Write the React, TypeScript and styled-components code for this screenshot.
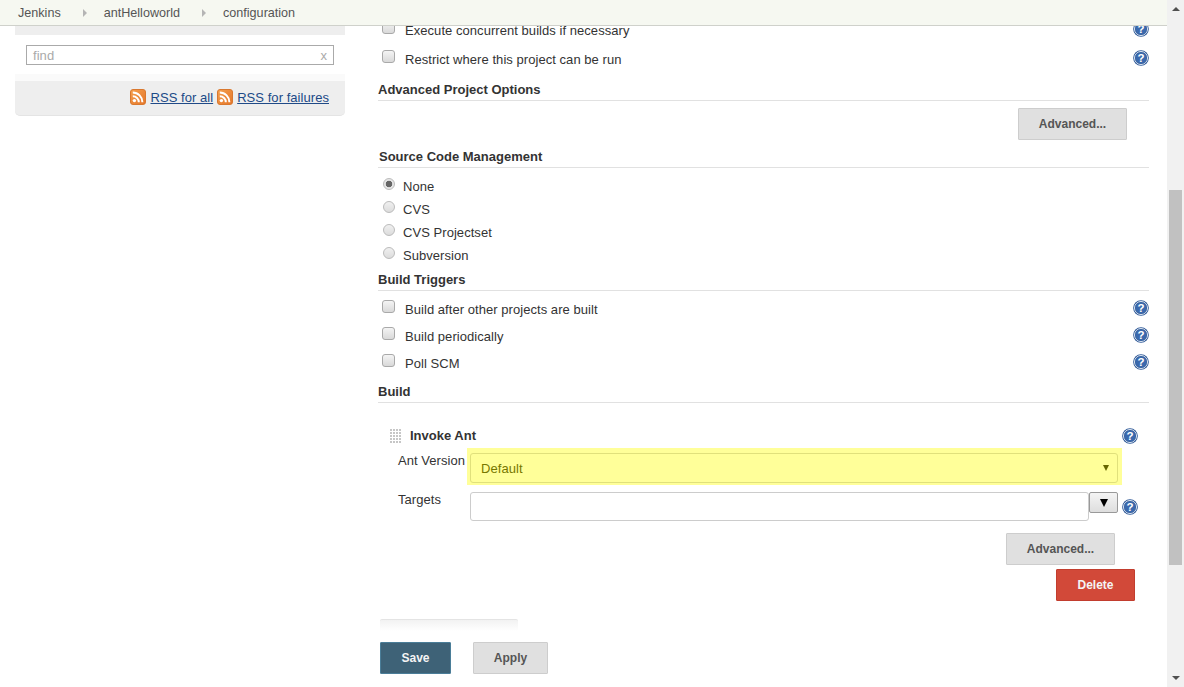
import { createGlobalStyle, styled } from 'styled-components';

const GlobalStyle = createGlobalStyle`
  html, body { margin: 0; padding: 0; height: 100%; overflow: hidden; background: #fff; }
  body { font-family: "Liberation Sans", Arial, sans-serif; font-size: 13px; letter-spacing: 0.05px; color: #333; }
`;

const Page = styled.div`
  display: flex;
  width: 1184px;
  height: 687px;
  overflow: hidden;
`;

const Viewport = styled.div`
  position: relative;
  flex: 1;
  display: flex;
  align-items: flex-start;
  padding-left: 15px;
  overflow: hidden;
`;

const Breadcrumbs = styled.nav`
  position: absolute;
  top: 0;
  left: 0;
  right: 0;
  z-index: 10;
  height: 25px;
  display: flex;
  align-items: center;
  padding-left: 18px;
  background: #f6f8f1;
  border-bottom: 1px solid #cfd1cb;
  color: #555;
  font-size: 12.6px;
  letter-spacing: 0;
`;

const Crumb = styled.span`
  display: inline-block;
`;

const CrumbArrow = styled.span`
  width: 0;
  height: 0;
  margin: 0 17px 0 22px;
  border-left: 4px solid #b5b5b5;
  border-top: 4px solid transparent;
  border-bottom: 4px solid transparent;
`;

const Sidebar = styled.aside`
  flex: none;
  width: 330px;
  height: 80px;
  padding-top: 35px;
  background: #eee;
  border-radius: 0 0 5px 5px;
  border-bottom: 1px solid #e4e4e4;
`;

const SearchPanel = styled.div`
  height: 46px;
  padding: 10px 11px 0;
  box-sizing: border-box;
  background: #fff;
  border-bottom: 7px solid #fafafa;
`;

const SearchBox = styled.div`
  display: flex;
  align-items: center;
  justify-content: space-between;
  height: 20px;
  box-sizing: border-box;
  padding: 0 6px;
  background: #fff;
  border: 1px solid #aaa;
  color: #aaa;
  font-size: 13px;
`;

const RssRow = styled.div`
  display: flex;
  justify-content: flex-end;
  align-items: center;
  gap: 4px;
  height: 32px;
  padding-right: 16px;
`;

const RssLink = styled.a`
  color: #204a87;
  text-decoration: underline;
  font-size: 13px;
`;

const Main = styled.main`
  flex: none;
  width: 771px;
  margin-left: 33px;
  padding-top: 16px;
  display: flex;
  flex-direction: column;
`;

const OptionRow = styled.label<{ $height?: number }>`
  display: flex;
  align-items: center;
  height: ${(p) => p.$height ?? 27}px;
  padding-left: 4px;
  color: #333;
`;

const OptionText = styled.span`
  flex: 1;
  margin-left: 5px;
`;

const OptionHelp = styled.span`
  display: inline-flex;
  margin-bottom: 4px;
`;

const TriggerGroup = styled.div`
  padding-top: 5px;
`;

const Checkbox = styled.input.attrs({ type: 'checkbox' })`
  appearance: none;
  width: 13px;
  height: 13px;
  margin: -6px 5px 0 0;
  border: 1px solid #a9a9a9;
  border-radius: 3px;
  background: linear-gradient(#f4f4f4, #d9d9d9);
`;

const RadioGroup = styled.div`
  padding-top: 7px;
`;

const RadioRow = styled.label`
  display: flex;
  align-items: center;
  height: 23px;
  padding-left: 5px;
  color: #333;
`;

const Radio = styled.input.attrs({ type: 'radio' })`
  appearance: none;
  width: 12px;
  height: 12px;
  margin: -6px 8px 0 0;
  border: 1px solid #bbb;
  border-radius: 50%;
  background: ${(p) =>
    p.defaultChecked
      ? 'radial-gradient(circle, #666 0 3px, #e6e6e6 3.6px)'
      : 'linear-gradient(#f0f0f0, #dcdcdc)'};
`;

const SectionTitle = styled.h3<{ $height: number; $pad?: number; $inset?: number }>`
  height: ${(p) => p.$height}px;
  box-sizing: border-box;
  margin: 0;
  padding-top: ${(p) => p.$pad ?? 0}px;
  padding-left: ${(p) => p.$inset ?? 0}px;
  display: flex;
  align-items: center;
  font-size: 13px;
  font-weight: 700;
  letter-spacing: 0;
  color: #333;
  border-bottom: 1px solid #e1e1e1;
`;

const ButtonRow = styled.div<{ $right: number; $top: number }>`
  display: flex;
  justify-content: flex-end;
  padding-right: ${(p) => p.$right}px;
  margin-top: ${(p) => p.$top}px;
`;

const Button = styled.button<{ $kind?: 'default' | 'danger' | 'primary'; $width: number }>`
  width: ${(p) => p.$width}px;
  height: 32px;
  padding: 0;
  font-family: inherit;
  font-size: 12px;
  font-weight: 700;
  border-radius: 1px;
  color: ${(p) => (p.$kind === 'default' || !p.$kind ? '#555' : '#f4f4f4')};
  background: ${(p) =>
    p.$kind === 'danger' ? '#d24939' : p.$kind === 'primary' ? '#3e6277' : '#e0e0e0'};
  border: 1px solid
    ${(p) => (p.$kind === 'danger' ? '#c23d2e' : p.$kind === 'primary' ? '#4a7d98' : '#cdcdcd')};
`;

const Builder = styled.section`
  margin-top: 21px;
  display: flex;
  flex-direction: column;
`;

const BuilderHead = styled.div`
  display: flex;
  align-items: center;
  height: 24px;
  padding: 0 11px 0 12px;
  font-weight: 700;
  letter-spacing: 0;
  color: #333;
`;

const Grip = styled.span`
  width: 11px;
  height: 14px;
  margin: -1px 9px 0 0;
  background-image: conic-gradient(from 0deg at 2px 2px, transparent 75%, #c6c6c6 0);
  background-size: 3px 3px;
`;

const BuilderTitle = styled.span`
  flex: 1;
  margin-top: -2px;
`;

const FieldRow = styled.div<{ $top?: number }>`
  display: flex;
  align-items: flex-start;
  padding-left: 20px;
  margin-top: ${(p) => p.$top ?? 0}px;
`;

const FieldLabel = styled.span<{ $top: number }>`
  width: 69px;
  flex: none;
  padding-top: ${(p) => p.$top}px;
  color: #333;
`;

const Highlight = styled.div`
  width: 648px;
  padding: 5px 4px 2px 3px;
  background: #ffff99;
`;

const SelectBox = styled.div`
  display: flex;
  align-items: center;
  justify-content: space-between;
  box-sizing: border-box;
  height: 30px;
  padding: 0 8px 0 10px;
  background: #ffff99;
  border: 1px solid #e0e07c;
  border-radius: 3px;
  color: #777700;
`;

const SelectCaret = styled.span`
  width: 0;
  height: 0;
  border-top: 6px solid #666600;
  border-left: 3px solid transparent;
  border-right: 3px solid transparent;
`;

const TextInput = styled.div`
  flex: none;
  width: 619px;
  height: 29px;
  margin-left: 3px;
  box-sizing: border-box;
  background: #fff;
  border: 1px solid #ccc;
  border-radius: 3px;
`;

const ComboButton = styled.div`
  flex: none;
  display: flex;
  align-items: center;
  justify-content: center;
  width: 29px;
  height: 21px;
  box-sizing: border-box;
  background: linear-gradient(#f4f4f4, #dedede);
  border: 1px solid #999;
  border-radius: 2px;
  &::before {
    content: '';
    border-top: 8px solid #000;
    border-left: 4px solid transparent;
    border-right: 4px solid transparent;
  }
`;

const HelpSlot = styled.span<{ $top?: number }>`
  display: inline-flex;
  flex: none;
  margin-left: 4px;
  margin-top: ${(p) => p.$top ?? 0}px;
`;

const RepeatEdge = styled.div`
  width: 138px;
  height: 12px;
  margin: 18px 0 0 2px;
  box-sizing: border-box;
  border-top: 1px solid #e4e4e4;
  border-radius: 2px 2px 0 0;
  background: linear-gradient(#f2f2f2, #fff);
`;

const FormActions = styled.div`
  display: flex;
  gap: 22px;
  margin: 11px 0 0 2px;
`;

const Scrollbar = styled.div`
  flex: none;
  width: 17px;
  display: flex;
  flex-direction: column;
  align-items: center;
  background: #f1f1f1;
`;

const ScrollArrow = styled.span<{ $down?: boolean }>`
  width: 0;
  height: 0;
  margin: ${(p) => (p.$down ? '0 0 7px' : '7px 0 0')};
  border-left: 4px solid transparent;
  border-right: 4px solid transparent;
  border-bottom: ${(p) => (p.$down ? '0' : '4px solid #505050')};
  border-top: ${(p) => (p.$down ? '4px solid #505050' : '0')};
`;

const ScrollTrack = styled.div`
  flex: 1;
  padding-top: 179px;
  padding-bottom: 111px;
  display: flex;
`;

const ScrollThumb = styled.div`
  flex: 1;
  width: 13px;
  background: #c1c1c1;
`;

function HelpIcon() {
  return (
    <svg width="16" height="16" viewBox="0 0 16 16">
      <circle cx="8" cy="8" r="7.8" fill="#2c5796" />
      <circle cx="8" cy="8" r="6.5" fill="none" stroke="#e3eaf4" strokeWidth="1" />
      <circle cx="8" cy="8" r="5.6" fill="#3a69ad" />
      <text x="8" y="12" textAnchor="middle" fontFamily="Liberation Sans, sans-serif" fontSize="11.5" fontWeight="700" fill="#fff">
        ?
      </text>
    </svg>
  );
}

function RssIcon() {
  return (
    <svg width="16" height="16" viewBox="0 0 16 16">
      <defs>
        <linearGradient id="rss-fill" x1="0" y1="0" x2="1" y2="1">
          <stop offset="0" stopColor="#f5a04e" />
          <stop offset="1" stopColor="#e4762a" />
        </linearGradient>
      </defs>
      <rect x="0.5" y="0.5" width="15" height="15" rx="2.5" fill="url(#rss-fill)" stroke="#d9782f" />
      <circle cx="4.4" cy="11.6" r="1.7" fill="#fff" />
      <path d="M2.8 7.2a6 6 0 0 1 6 6M2.8 3.6a9.6 9.6 0 0 1 9.6 9.6" fill="none" stroke="#fff" strokeWidth="2" />
    </svg>
  );
}

const topOptions = ['Execute concurrent builds if necessary', 'Restrict where this project can be run'];
const scmOptions = ['None', 'CVS', 'CVS Projectset', 'Subversion'];
const triggers = ['Build after other projects are built', 'Build periodically', 'Poll SCM'];

export default function App() {
  return (
    <Page>
      <GlobalStyle />
      <Viewport>
        <Breadcrumbs>
          <Crumb>Jenkins</Crumb>
          <CrumbArrow />
          <Crumb>antHelloworld</Crumb>
          <CrumbArrow />
          <Crumb>configuration</Crumb>
        </Breadcrumbs>

        <Sidebar>
          <SearchPanel>
            <SearchBox>
              <span>find</span>
              <span>x</span>
            </SearchBox>
          </SearchPanel>
          <RssRow>
            <RssIcon />
            <RssLink href="#">RSS for all</RssLink>
            <RssIcon />
            <RssLink href="#">RSS for failures</RssLink>
          </RssRow>
        </Sidebar>

        <Main>
          {topOptions.map((label) => (
            <OptionRow key={label} $height={29}>
              <Checkbox />
              <OptionText>{label}</OptionText>
              <OptionHelp>
                <HelpIcon />
              </OptionHelp>
            </OptionRow>
          ))}
          <SectionTitle $height={27} $pad={4}>Advanced Project Options</SectionTitle>
          <ButtonRow $right={22} $top={7}>
            <Button $width={109}>Advanced...</Button>
          </ButtonRow>

          <SectionTitle $height={28} $pad={6} $inset={1}>Source Code Management</SectionTitle>
          <RadioGroup>
            {scmOptions.map((label, i) => (
              <RadioRow key={label}>
                <Radio name="scm" defaultChecked={i === 0} />
                {label}
              </RadioRow>
            ))}
          </RadioGroup>

          <SectionTitle $height={24} $pad={2}>Build Triggers</SectionTitle>
          <TriggerGroup>
            {triggers.map((label) => (
              <OptionRow key={label}>
                <Checkbox />
                <OptionText>{label}</OptionText>
                <OptionHelp>
                  <HelpIcon />
                </OptionHelp>
              </OptionRow>
            ))}
          </TriggerGroup>
          <SectionTitle $height={26} $pad={3}>Build</SectionTitle>

          <Builder>
            <BuilderHead>
              <Grip />
              <BuilderTitle>Invoke Ant</BuilderTitle>
              <HelpIcon />
            </BuilderHead>
            <FieldRow>
              <FieldLabel $top={5}>Ant Version</FieldLabel>
              <Highlight>
                <SelectBox>
                  Default
                  <SelectCaret />
                </SelectBox>
              </Highlight>
            </FieldRow>
            <FieldRow $top={7}>
              <FieldLabel $top={0}>Targets</FieldLabel>
              <TextInput />
              <ComboButton />
              <HelpSlot $top={7}>
                <HelpIcon />
              </HelpSlot>
            </FieldRow>
            <ButtonRow $right={34} $top={12}>
              <Button $width={109}>Advanced...</Button>
            </ButtonRow>
            <ButtonRow $right={14} $top={4}>
              <Button $kind="danger" $width={79}>Delete</Button>
            </ButtonRow>
          </Builder>

          <RepeatEdge />
          <FormActions>
            <Button $kind="primary" $width={71}>Save</Button>
            <Button $width={75}>Apply</Button>
          </FormActions>
        </Main>
      </Viewport>
      <Scrollbar>
        <ScrollArrow />
        <ScrollTrack>
          <ScrollThumb />
        </ScrollTrack>
        <ScrollArrow $down />
      </Scrollbar>
    </Page>
  );
}
